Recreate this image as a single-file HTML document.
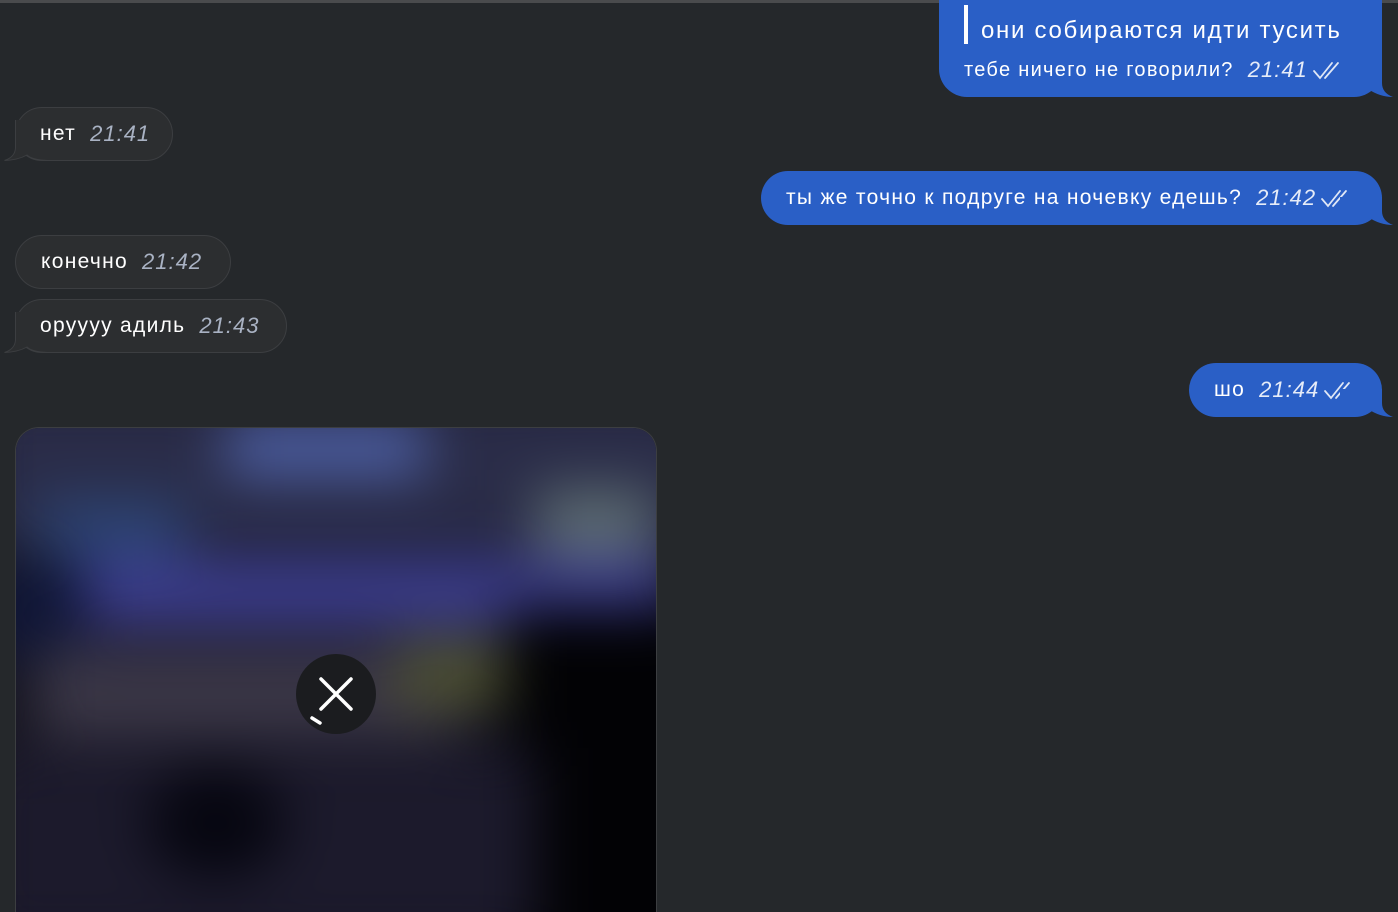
<!DOCTYPE html>
<html><head><meta charset="utf-8"><style>
html,body{margin:0;padding:0;width:1398px;height:912px;overflow:hidden;background:#25282b;font-family:"Liberation Sans","DejaVu Sans",sans-serif;}
.top{position:absolute;left:0;top:0;width:1398px;height:3px;background:#4a4b4d;}
.b{position:absolute;height:54px;border-radius:27px;color:#fff;font-size:21px;letter-spacing:1.3px;box-sizing:border-box;display:flex;align-items:center;padding:0 25px;white-space:nowrap;}
.in{background:#2c2e30;border:1px solid #3c3e41;}
.out{background:#2a5fc6;}
.t{font-style:italic;margin-left:14px;font-size:22px;letter-spacing:1px;}
.in .t{color:#a9b2c3;}
.out .t{color:#e6ecf8;}
.ck{margin-left:3px;}
svg.tail{position:absolute;}
.hid, .hid .t{color:transparent !important;}
</style></head><body>
<div class="top"></div>

<div style="position:absolute;left:939px;top:-20px;width:443px;height:117px;background:#2a5fc6;border-radius:0 0 28px 28px;"></div>
<svg class="tail" style="left:1340px;top:69px" width="54" height="29"><path d="M0 0 L42 0 L42 14 Q42 24 53 28 Q40 28 28 20 Q22 28 0 28 Z" fill="#2a5fc6"/></svg>
<div style="position:absolute;left:964px;top:5px;width:4px;height:39px;background:#fff;"></div>
<div style="position:absolute;left:981px;top:17px;color:#fff;font-size:24px;letter-spacing:1.7px;white-space:nowrap;">они собираются идти тусить</div>
<div style="position:absolute;left:964px;top:57px;color:#fff;font-size:20px;letter-spacing:1.3px;white-space:nowrap;display:flex;align-items:center;">тебе ничего не говорили?<span style="font-style:italic;margin-left:14px;font-size:22px;letter-spacing:1px;color:#e6ecf8">21:41</span><svg class="ck" width="30" height="22" viewBox="0 0 30 22"><path d="M3 12 L9 19 L21 4 M14 19 L27 4" stroke="#dfe7f6" stroke-width="1.8" fill="none" stroke-linecap="round"/></svg></div>

<div class="b in hid" style="left:15px;top:107px;width:158px;">нет<span class="t">21:41</span></div>
<svg class="tail" style="left:4px;top:120px" width="44" height="42"><path d="M11.5 0 L11.5 28 Q11 37 0.5 40.5 Q14 40 23 35 Q28 40 44 40.5 L44 0 Z" fill="#2c2e30"/><path d="M11.5 0 L11.5 28 Q11 37 0.5 40.5 Q14 40 23 35 Q28 40 44 40.5" fill="none" stroke="#3c3e41" stroke-width="1"/></svg>
<div style="position:absolute;left:40px;top:107px;height:54px;display:flex;align-items:center;color:#fff;font-size:21px;letter-spacing:1.3px;white-space:nowrap;">нет<span style="font-style:italic;margin-left:14px;font-size:22px;letter-spacing:1px;color:#a9b2c3">21:41</span></div>

<div class="b out" style="left:761px;top:171px;width:621px;">ты же точно к подруге на ночевку едешь?<span class="t">21:42</span><svg class="ck" width="30" height="22" viewBox="0 0 30 22"><path d="M3 12 L9 19 L21 4 M14 19 L27 4" stroke="#dfe7f6" stroke-width="1.8" fill="none" stroke-linecap="round"/></svg></div>
<svg class="tail" style="left:1340px;top:197px" width="54" height="29"><path d="M0 0 L42 0 L42 14 Q42 24 53 28 Q40 28 28 20 Q22 28 0 28 Z" fill="#2a5fc6"/></svg>

<div class="b in" style="left:15px;top:235px;width:216px;">конечно<span class="t">21:42</span></div>

<div class="b in hid" style="left:15px;top:299px;width:272px;">оруууу адиль<span class="t">21:43</span></div>
<svg class="tail" style="left:4px;top:312px" width="44" height="42"><path d="M11.5 0 L11.5 28 Q11 37 0.5 40.5 Q14 40 23 35 Q28 40 44 40.5 L44 0 Z" fill="#2c2e30"/><path d="M11.5 0 L11.5 28 Q11 37 0.5 40.5 Q14 40 23 35 Q28 40 44 40.5" fill="none" stroke="#3c3e41" stroke-width="1"/></svg>
<div style="position:absolute;left:40px;top:299px;height:54px;display:flex;align-items:center;color:#fff;font-size:21px;letter-spacing:1.3px;white-space:nowrap;">оруууу адиль<span style="font-style:italic;margin-left:14px;font-size:22px;letter-spacing:1px;color:#a9b2c3">21:43</span></div>

<div class="b out" style="left:1189px;top:363px;width:193px;">шо<span class="t">21:44</span><svg class="ck" width="30" height="22" viewBox="0 0 30 22"><path d="M3 12 L9 19 L21 4 M14 19 L27 4" stroke="#dfe7f6" stroke-width="1.8" fill="none" stroke-linecap="round"/></svg></div>
<svg class="tail" style="left:1340px;top:389px" width="54" height="29"><path d="M0 0 L42 0 L42 14 Q42 24 53 28 Q40 28 28 20 Q22 28 0 28 Z" fill="#2a5fc6"/></svg>

<div style="position:absolute;left:15px;top:427px;width:642px;height:485px;border-radius:24px 24px 0 0;overflow:hidden;background:#14131e;border:1px solid #3c3e41;border-bottom:none;box-sizing:border-box;">
  <div style="position:absolute;inset:-40px;filter:blur(28px);">
    <div style="position:absolute;left:0;top:0;width:740px;height:160px;background:#2a2c48;"></div>
    <div style="position:absolute;left:250px;top:30px;width:200px;height:60px;background:#4b5da0;"></div>
    <div style="position:absolute;left:60px;top:110px;width:150px;height:60px;background:#2c4372;"></div>
    <div style="position:absolute;left:560px;top:100px;width:120px;height:70px;background:#5b6a70;"></div>
    <div style="position:absolute;left:100px;top:170px;width:600px;height:70px;background:#3b3c8c;"></div>
    <div style="position:absolute;left:0;top:180px;width:110px;height:90px;background:#101637;"></div>
    <div style="position:absolute;left:60px;top:260px;width:420px;height:90px;background:#3b3747;"></div>
    <div style="position:absolute;left:420px;top:250px;width:120px;height:70px;background:#4d5032;"></div>
    <div style="position:absolute;left:530px;top:220px;width:220px;height:400px;background:#020205;"></div>
    <div style="position:absolute;left:0;top:360px;width:560px;height:200px;background:#1c1a2c;"></div>
    <div style="position:absolute;left:170px;top:380px;width:140px;height:110px;background:#060610;border-radius:50%;"></div>
  </div>
</div>
<svg style="position:absolute;left:296px;top:654px" width="80" height="80" viewBox="0 0 80 80">
<circle cx="40" cy="40" r="40" fill="#1b1c1f"/>
<path d="M25 25 L55 55 M55 25 L25 55" stroke="#fff" stroke-width="3.5" stroke-linecap="round"/>
<path d="M16 64 L24 69" stroke="#fff" stroke-width="3.5" stroke-linecap="round"/>
</svg>
</body></html>
